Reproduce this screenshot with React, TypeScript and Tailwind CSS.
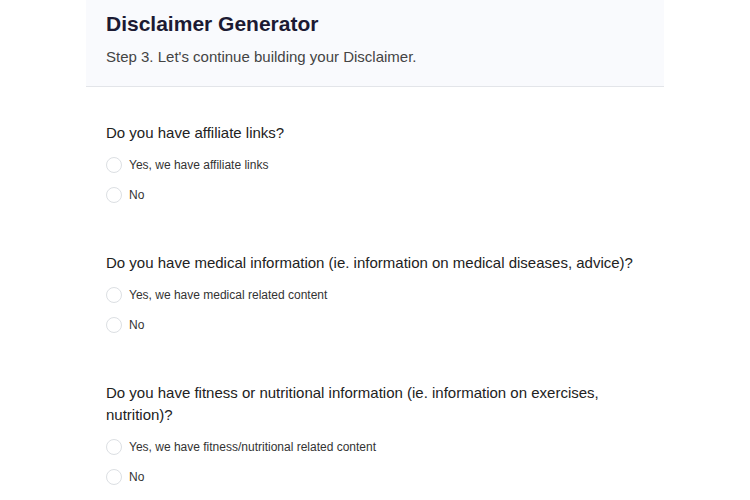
import React from "react";

const sections = [
  {
    q: "Do you have affiliate links?",
    opts: ["Yes, we have affiliate links", "No"],
  },
  {
    q: "Do you have medical information (ie. information on medical diseases, advice)?",
    opts: ["Yes, we have medical related content", "No"],
  },
  {
    q: "Do you have fitness or nutritional information (ie. information on exercises, nutrition)?",
    opts: ["Yes, we have fitness/nutritional related content", "No"],
  },
];

export default function App() {
  return (
    <div className="w-[750px] h-[500px] overflow-hidden bg-white" style={{ fontFamily: '"Liberation Sans", Arial, sans-serif' }}>
      <div className="w-[578px] mx-auto">
        <div className="bg-[#f9fafd] border-b border-[#e3e5e9] px-5 pt-[10px] pb-[19px]">
          <h1 className="text-[21px] leading-[28px] font-bold text-[#1c1a33]">Disclaimer Generator</h1>
          <p className="mt-[9px] text-[15px] leading-[20px] text-[#444]">Step 3. Let's continue building your Disclaimer.</p>
        </div>
        <div className="px-5 pt-[35px] flex flex-col gap-[42px]">
          {sections.map((s, i) => (
            <div key={i}>
              <div className="text-[15px] leading-[22px] text-[#222] mb-[6px]">{s.q}</div>
              {s.opts.map((o, j) => (
                <label key={j} className="flex items-center h-[30px] gap-[7px]">
                  <span className="w-4 h-4 rounded-full border border-[#dcdfe3] bg-white shrink-0" />
                  <span className="text-[12px] text-[#333]">{o}</span>
                </label>
              ))}
            </div>
          ))}
        </div>
      </div>
    </div>
  );
}
